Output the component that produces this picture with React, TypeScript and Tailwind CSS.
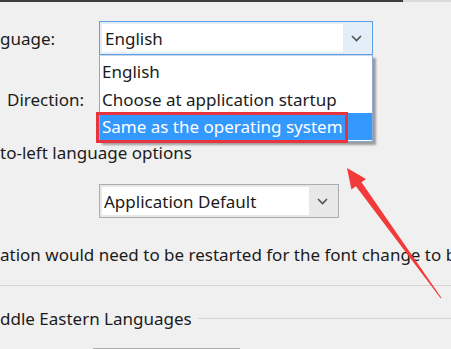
import React from 'react';

function Chevron() {
  return (
    <svg width="11" height="7" viewBox="0 0 11 7" fill="none">
      <path d="M1 1l4.5 4.5L10 1" stroke="#505050" strokeWidth="1.6" />
    </svg>
  );
}

export default function App() {
  const items = ['English', 'Choose at application startup'];

  return (
    <div
      className="relative w-[451px] h-[349px] overflow-hidden bg-[#f0f0f0] text-[17px] text-[#1b1b1b] leading-none"
      style={{ fontFamily: '"Noto Sans", "Open Sans", sans-serif' }}
    >
      {/* window edge */}
      <div className="flex h-[2px]">
        <div className="w-[403px] bg-[#3c3c3c]" />
        <div className="flex-1 bg-[#dcdcdc]" />
      </div>

      {/* language */}
      <div className="mt-[19px] flex h-[34px] items-center">
        <span className="w-[99px]">guage:</span>
        <div className="relative flex h-[34px] w-[274px] border border-[#5d9fe3] bg-[#e3eefa] p-[2px]">
          <div className="flex flex-1 items-center bg-white pl-[3px]">English</div>
          <div className="flex w-[27px] items-center justify-center">
            <Chevron />
          </div>

          {/* open list */}
          <div className="absolute left-[-1px] top-[33px] z-10 w-[274px] border border-[#8aa8cf] border-t-[#c8d6e8] bg-white py-px shadow-[3px_3px_2px_rgba(0,0,0,0.35)]">
            {items.map((t) => (
              <div key={t} className="flex h-[28px] items-center pl-[2px]">
                {t}
              </div>
            ))}
            <div className="flex h-[27px] items-center bg-[#3399ff] pl-[2px] text-white">
              Same as the operating system
            </div>
          </div>
          <div className="absolute left-[-4px] top-[90px] z-20 h-[31px] w-[252px] border-[3px] border-[#e8343c]" />
        </div>
      </div>

      {/* direction */}
      <div className="mt-[27px] flex h-[34px] items-center">
        <span className="ml-[7px]">Direction:</span>
      </div>

      {/* rtl options */}
      <div className="mt-[24px] flex h-[24px] items-center">
        <span>to-left language options</span>
      </div>

      {/* font */}
      <div className="mt-[20px] flex h-[34px] items-center pl-[99px]">
        <div className="flex h-[34px] w-[240px] border border-[#adadad] bg-[#e8e8e8] p-[2px]">
          <div className="flex flex-1 items-center bg-white pl-[2px]">Application Default</div>
          <div className="flex w-[27px] items-center justify-center">
            <Chevron />
          </div>
        </div>
      </div>

      <div className="mt-[24px] flex h-[24px] items-center whitespace-nowrap">
        ation would need to be restarted for the font change to be
      </div>

      <div className="mt-[19px] h-px bg-[#d5d5d5]" />

      {/* group */}
      <div className="mt-[20px] flex h-[24px] items-center whitespace-nowrap">
        <span>ddle Eastern Languages</span>
        <div className="ml-[6px] h-px flex-1 bg-[#d5d5d5]" />
      </div>

      <div className="ml-[93px] mt-[18px] h-px w-[147px] bg-[#adadad]" />

      {/* annotation arrow */}
      <svg className="absolute left-0 top-0 z-30" width="451" height="349" viewBox="0 0 451 349">
        <polygon
          points="347,168 366,179 361.5,182.2 441.4,297.7 440.6,298.3 355.9,186.3 351.4,189.5"
          fill="#f23a3a"
        />
      </svg>
    </div>
  );
}
